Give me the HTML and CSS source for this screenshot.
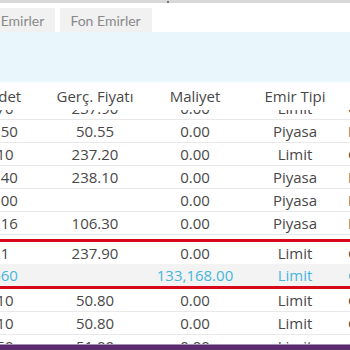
FILE: index.html
```html
<!DOCTYPE html>
<html lang="tr">
<head>
	<meta charset="UTF-8">
	<title>Emirler</title>
	<link rel="stylesheet" href="styles.css">
</head>
<body>
	<div class="page">
		<div class="topbar"><span class="tick"></span></div>

		<div class="tabs">
			<div class="tab">Tüm Emirler</div>
			<div class="tab">Fon Emirler</div>
		</div>

		<div class="filter"></div>

		<div class="grid-wrap">
			<div class="grid">
				<div class="row head">
					<div>Adet</div>
					<div>Gerç. Fiyatı</div>
					<div>Maliyet</div>
					<div>Emir Tipi</div>
					<div>Geçerlilik</div>
				</div>

				<div class="row cut">
					<div>70</div><div>237.90</div><div>0.00</div><div>Limit</div><div class="left">Günlük</div>
				</div>
				<div class="row">
					<div>150</div><div>50.55</div><div>0.00</div><div>Piyasa</div><div class="left">KİE</div>
				</div>
				<div class="row">
					<div>10</div><div>237.20</div><div>0.00</div><div>Limit</div><div class="left">Günlük</div>
				</div>
				<div class="row">
					<div>140</div><div>238.10</div><div>0.00</div><div>Piyasa</div><div class="left">KİE</div>
				</div>
				<div class="row">
					<div>100</div><div></div><div>0.00</div><div>Piyasa</div><div class="left">KİE</div>
				</div>
				<div class="row">
					<div>116</div><div>106.30</div><div>0.00</div><div>Piyasa</div><div class="left">KİE</div>
				</div>

				<div class="group">
					<div class="row">
						<div>1</div><div>237.90</div><div>0.00</div><div>Limit</div><div class="left">Günlük</div>
					</div>
					<div class="row sub">
						<div>560</div><div></div><div>133,168.00</div><div>Limit</div><div class="left">Günlük</div>
					</div>
				</div>

				<div class="row">
					<div>10</div><div>50.80</div><div>0.00</div><div>Limit</div><div class="left">Günlük</div>
				</div>
				<div class="row">
					<div>10</div><div>50.80</div><div>0.00</div><div>Limit</div><div class="left">Günlük</div>
				</div>
				<div class="row">
					<div>50</div><div>51.00</div><div>0.00</div><div>Limit</div><div class="left">Günlük</div>
				</div>
			</div>
		</div>

		<div class="footer"></div>
	</div>
</body>
</html>
```

FILE: styles.css
```css
* {
	box-sizing: border-box;
}

body {
	margin: 0;
	font-family: "Open Sans", "Liberation Sans", sans-serif;
	color: #484848;
}

.page {
	display: flex;
	flex-direction: column;
	width: 350px;
	height: 350px;
	overflow: hidden;
	background: #fff;
}

.topbar {
	flex: none;
	height: 4px;
	border-top: 3px solid #d8d8d8;
}

.tick {
	display: block;
	width: 2px;
	height: 2px;
	margin-left: 167px;
	margin-top: -2px;
	background: #777;
}

.tabs {
	flex: none;
	display: flex;
	gap: 5px;
	height: 28px;
	padding-top: 4px;
	margin-left: -39px;
	font-family: Lato, "Open Sans", sans-serif;
	font-size: 14px;
	color: #8a8a8a;
}

.tab {
	height: 24px;
	line-height: 25px;
	padding: 0 11px 0 10px;
	background: #f1f1f1;
}

.filter {
	flex: none;
	height: 50px;
	background: #e9f6fb;
}

.grid-wrap {
	flex: 1;
	overflow: hidden;
}

.grid {
	width: 480px;
	margin-left: -35px;
	font-size: 15px;
}

.row {
	display: grid;
	grid-template-columns: 80px 100px 100px 100px 100px;
	grid-template-rows: 22px;
	align-items: center;
	text-align: center;
	white-space: nowrap;
	border-bottom: 1px solid #e9e9e9;
	line-height: 22px;
}

.row .left {
	text-align: left;
	padding-left: 3px;
}

.row.head {
	grid-template-rows: 27px;
	border-bottom: none;
	line-height: 27px;
	padding-top: 1px;
}

.row.cut {
	grid-template-rows: 9px;
	align-items: end;
	overflow: hidden;
}

.row.cut > div {
	height: 22px;
}

.group {
	margin-top: 4px;
	border-top: 3px solid #d8081c;
	border-bottom: 3px solid #d8081c;
}

.group .row {
	border-bottom: none;
}

.row.sub {
	background: #f3f3f3;
	color: #45b6dd;
}

.footer {
	flex: none;
	height: 6px;
	border-top: 1px solid #a88db3;
	background: #5a2b6d;
}
```
